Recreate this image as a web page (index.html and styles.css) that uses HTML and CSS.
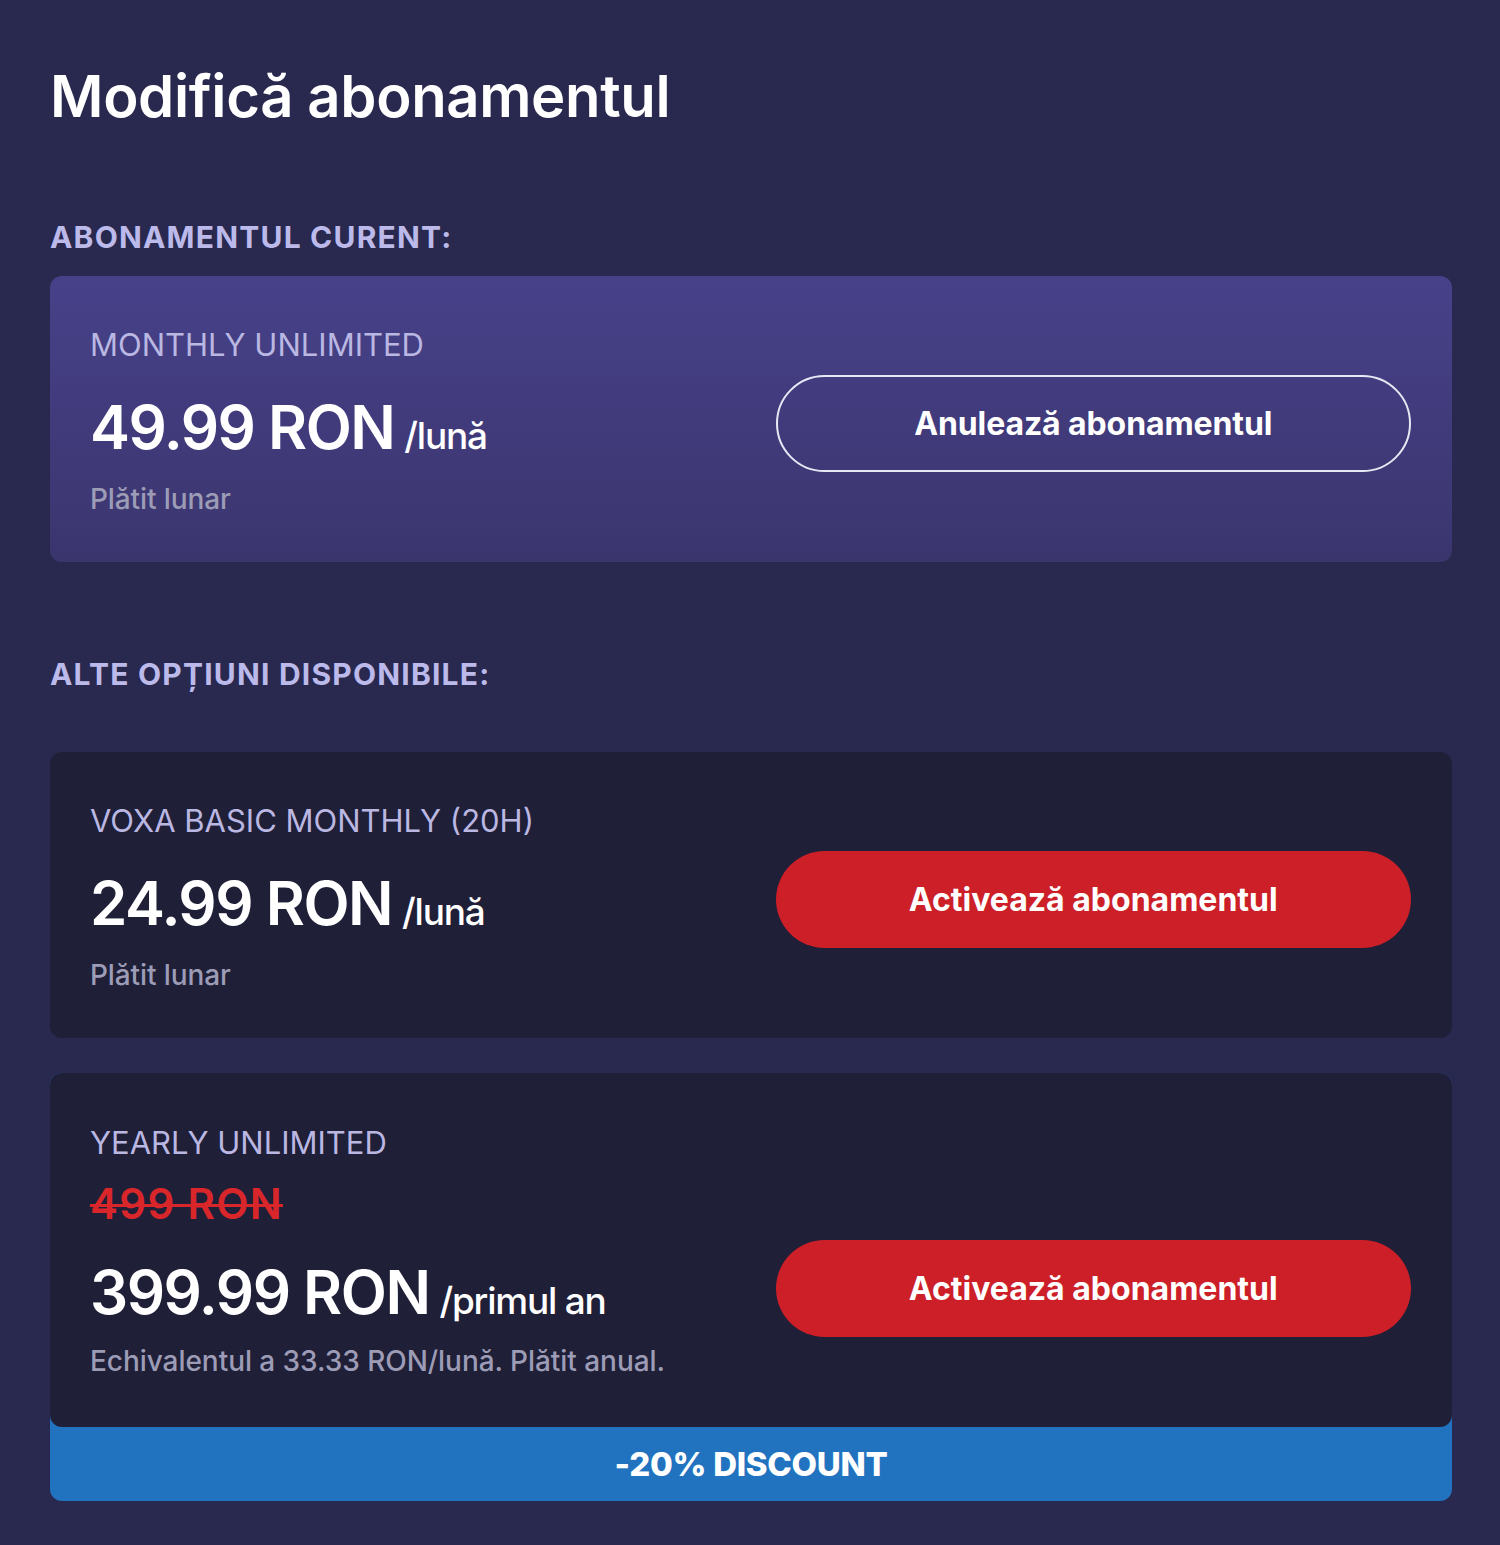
FILE: index.html
```html
<!DOCTYPE html>
<html lang="ro">
<head>
<meta charset="utf-8">
<title>Modifică abonamentul</title>
<link rel="stylesheet" href="styles.css">
</head>
<body>
<main class="page">
  <h1 class="title">Modifică abonamentul</h1>

  <h2 class="section-label label-current">ABONAMENTUL CURENT:</h2>
  <section class="plan plan-current">
    <div class="plan-info">
      <div class="plan-name">MONTHLY UNLIMITED</div>
      <div class="plan-price"><span class="amount">49.99 RON</span> <span class="period">/lună</span></div>
      <div class="plan-note">Plătit lunar</div>
    </div>
    <div class="plan-action">
      <button class="btn btn-outline">Anulează abonamentul</button>
    </div>
  </section>

  <h2 class="section-label label-other">ALTE OPȚIUNI DISPONIBILE:</h2>
  <section class="plan plan-option">
    <div class="plan-info">
      <div class="plan-name">VOXA BASIC MONTHLY (20H)</div>
      <div class="plan-price"><span class="amount">24.99 RON</span> <span class="period">/lună</span></div>
      <div class="plan-note">Plătit lunar</div>
    </div>
    <div class="plan-action">
      <button class="btn btn-red">Activează abonamentul</button>
    </div>
  </section>

  <div class="discount-wrap">
    <section class="plan plan-option plan-yearly">
      <div class="plan-info">
        <div class="plan-name">YEARLY UNLIMITED</div>
        <div class="old-price">499 RON</div>
        <div class="plan-price"><span class="amount">399.99 RON</span> <span class="period">/primul an</span></div>
        <div class="plan-note">Echivalentul a 33.33 RON/lună. Plătit anual.</div>
      </div>
      <div class="plan-action">
        <button class="btn btn-red">Activează abonamentul</button>
      </div>
    </section>
    <div class="discount-label">-20% DISCOUNT</div>
  </div>
</main>
</body>
</html>
```

FILE: styles.css
```css
* { box-sizing: border-box; }

html, body {
  margin: 0;
  padding: 0;
  background: #29294f;
}

body {
  font-family: Inter, "Noto Sans", "DejaVu Sans", sans-serif;
  color: #ffffff;
  height: 1545px;
  overflow: hidden;
}

.page {
  padding: 56px 48px 0 50px;
}

.title {
  margin: 0;
  font-size: 58px;
  line-height: 80px;
  font-weight: 600;
  letter-spacing: -0.35px;
  color: #ffffff;
}

.section-label {
  margin: 0;
  font-size: 30px;
  line-height: 40px;
  font-weight: 700;
  letter-spacing: 1.2px;
  color: #bcbaea;
}

.label-current {
  margin-top: 81px;
  margin-bottom: 19px;
}

.label-other {
  margin-top: 92px;
  margin-bottom: 58px;
}

.plan {
  display: grid;
  grid-template-columns: 1fr 1fr;
  column-gap: 50px;
  align-items: start;
  padding: 49px 41px 0 40px;
  border-radius: 12px;
}

.plan-current {
  height: 286px;
  background: linear-gradient(180deg, #47418a 0%, #3b356e 100%);
}

.plan-option {
  height: 286px;
  background: #1f1f38;
  margin-bottom: 35px;
}

.plan-yearly {
  height: 354px;
  margin-bottom: 0;
  padding-top: 50px;
}

.plan-name {
  font-size: 31px;
  line-height: 40px;
  font-weight: 400;
  letter-spacing: 0px;
  color: #bab7e2;
}

.plan-price {
  margin-top: 30px;
  display: flex;
  align-items: baseline;
  white-space: nowrap;
}

.amount {
  font-size: 60px;
  line-height: 64px;
  font-weight: 600;
  letter-spacing: -1.5px;
  color: #ffffff;
}

.period {
  margin-left: 10px;
  font-size: 37px;
  font-weight: 500;
  letter-spacing: -1.2px;
  color: #ffffff;
}

.plan-note {
  margin-top: 22px;
  font-size: 28px;
  line-height: 36px;
  font-weight: 500;
  letter-spacing: -0.1px;
  color: #9d9cb6;
}

.old-price {
  margin-top: 18px;
  font-size: 42px;
  line-height: 46px;
  font-weight: 600;
  letter-spacing: 1.3px;
  color: #d9262b;
  text-decoration: line-through;
  text-decoration-thickness: 3px;
}

.plan-yearly .plan-price {
  margin-top: 33px;
}

.plan-yearly .plan-note {
  margin-top: 19px;
  letter-spacing: -0.05px;
}

.plan-action {
  align-self: end;
  margin-bottom: 90px;
}

.btn {
  display: block;
  width: 100%;
  height: 97px;
  border-radius: 49px;
  font-family: inherit;
  font-size: 32px;
  font-weight: 700;
  letter-spacing: 0px;
  color: #ffffff;
  cursor: pointer;
}

.btn-outline {
  background: transparent;
  border: 2px solid #e8e8f4;
  letter-spacing: -0.1px;
}

.btn-red {
  background: #cc1f27;
  border: none;
}

.discount-wrap {
  background: #2173c0;
  border-radius: 12px;
}

.discount-label {
  height: 74px;
  display: flex;
  align-items: center;
  justify-content: center;
  font-size: 33px;
  font-weight: 800;
  letter-spacing: -0.3px;
  color: #ffffff;
}
```
